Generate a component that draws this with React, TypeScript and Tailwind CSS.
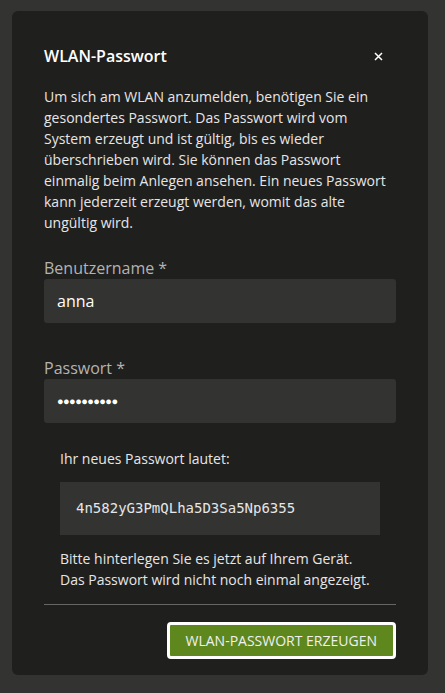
import React from "react";

export default function App() {
  return (
    <div
      className="min-h-[693px] w-[445px] bg-[#333332] pt-[11px] pl-[12px] pr-[17px] pb-[17px]"
      style={{ fontFamily: '"Open Sans", sans-serif' }}
    >
      <div className="rounded-[6px] bg-[#1f1f1e] px-[32px] pt-[32px] pb-[16px] text-[#e6e6e6]">
        <div className="flex items-center justify-between h-[26px]">
          <h2 className="text-[16px] font-semibold text-white leading-[26px]">WLAN-Passwort</h2>
          <button className="mr-[10px] flex h-[16px] w-[16px] items-center justify-center text-white">
            <svg width="9" height="9" viewBox="0 0 9 9">
              <path d="M1 1L8 8M8 1L1 8" stroke="white" strokeWidth="1.5" />
            </svg>
          </button>
        </div>
        <p className="mt-[17px] text-[14px] leading-[21px] text-[#e6e6e6]">
          Um sich am WLAN anzumelden, benötigen Sie ein gesondertes Passwort. Das Passwort wird vom System erzeugt und ist gültig, bis es wieder überschrieben wird. Sie können das Passwort einmalig beim Anlegen ansehen. Ein neues Passwort kann jederzeit erzeugt werden, womit das alte ungültig wird.
        </p>

        <div className="mt-[24px]">
          <label className="block text-[16px] leading-[22px] text-[#b3b3b3]">Benutzername *</label>
          <div className="mt-0 flex h-[44px] items-center rounded-[3px] bg-[#333332] px-[13px] text-[16px] text-white">
            anna
          </div>
        </div>

        <div className="mt-[34px]">
          <label className="block text-[16px] leading-[22px] text-[#b3b3b3]">Passwort *</label>
          <div className="mt-0 flex h-[44px] items-center rounded-[3px] bg-[#333332] px-[13px] text-[11px] tracking-[-0.6px] text-white">
            ●●●●●●●●●●
          </div>
        </div>

        <div className="px-[16px] pt-[25px]">
          <p className="text-[14px] leading-[21px] text-[#e6e6e6]">Ihr neues Passwort lautet:</p>
          <div
            className="mt-[13px] flex h-[53px] items-center bg-[#333332] px-[16px] text-[14px] text-[#e6e6e6]"
            style={{ fontFamily: '"DejaVu Sans Mono", monospace' }}
          >
            4n582yG3PmQLha5D3Sa5Np6355
          </div>
          <p className="mt-[13px] text-[14px] leading-[21px] text-[#e6e6e6]">
            Bitte hinterlegen Sie es jetzt auf Ihrem Gerät.
            <br />
            Das Passwort wird nicht noch einmal angezeigt.
          </p>
        </div>

        <div className="mt-[14px] h-px bg-[#666665]" />

        <div className="mt-[17px] flex justify-end">
          <button className="flex h-[37px] items-center rounded-[4px] border-[3px] border-white bg-[#5e881e] px-[16px] text-[14px] text-[#f0f0f0]">
            WLAN-PASSWORT ERZEUGEN
          </button>
        </div>
      </div>
    </div>
  );
}
